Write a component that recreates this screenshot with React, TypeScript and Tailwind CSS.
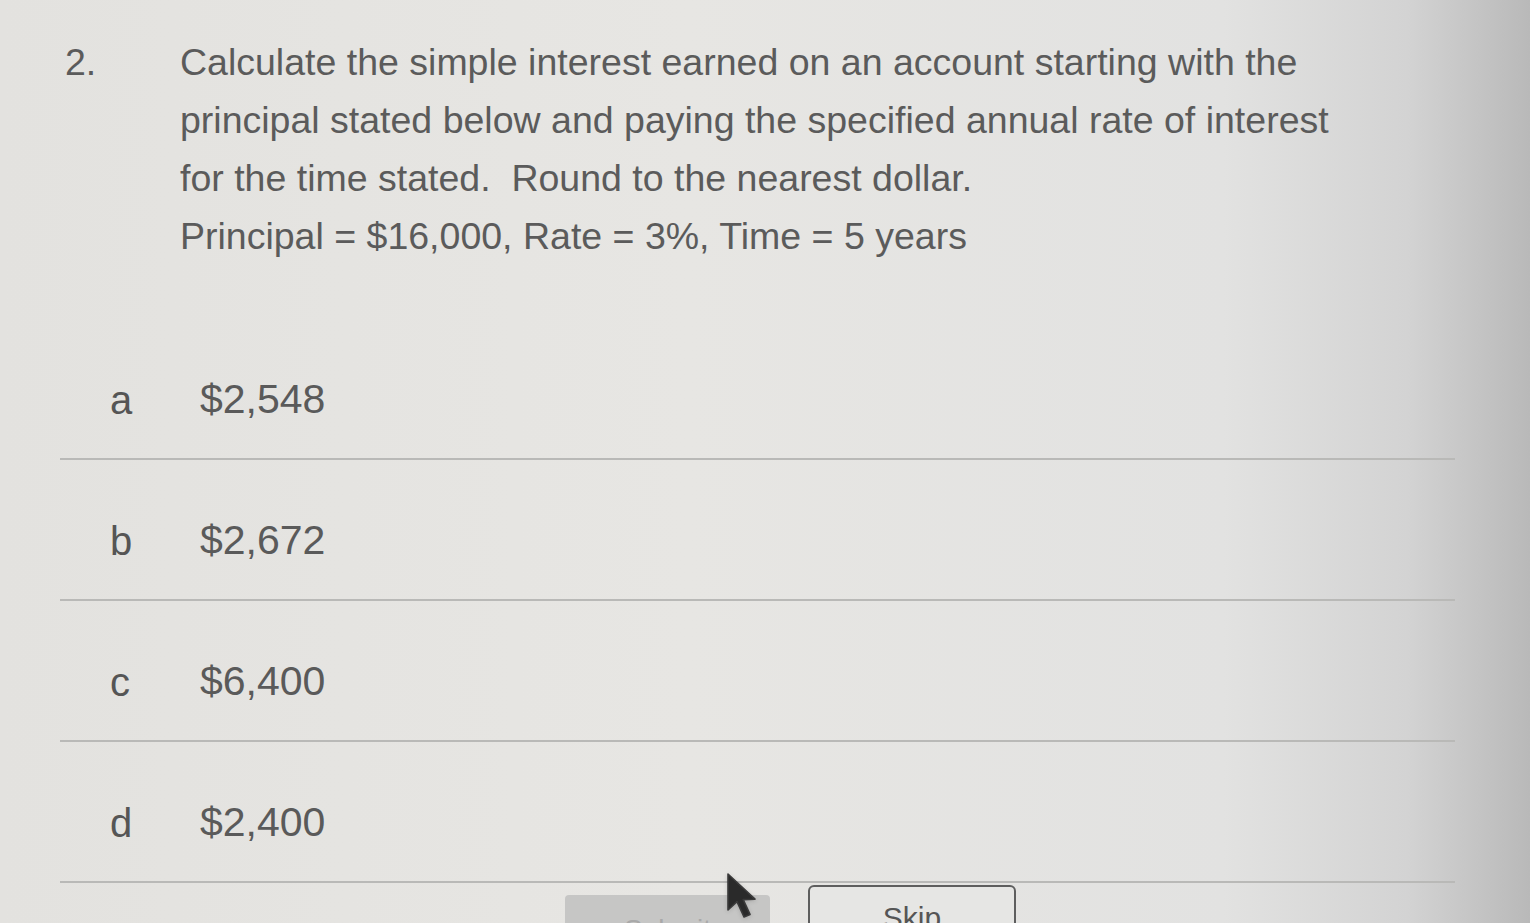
import { useMemo } from "react";

type Choice = { key: string; label: string };

function Cursor() {
    return (
        <svg
            className="absolute left-[726px] top-[872px] drop-shadow-sm"
            width="40"
            height="50"
            viewBox="0 0 20 25"
        >
            <path d="M1 1 L1 19 L5.5 14.8 L9 22.5 L12 21.2 L8.6 13.8 L14.5 13.6 Z" fill="#2a2a2a" stroke="#3a3a3a" strokeWidth="0.8" strokeLinejoin="round" />
        </svg>
    );
}

function ChoiceRow({ choice }: { choice: Choice }) {
    return (
        <div className="flex h-[141px] items-center border-b-2 border-[#b9b9b7] pt-[22px]">
            <span className="w-[140px] pl-[50px] text-[40px] text-[#555]">{choice.key}</span>
            <span className="text-[41px] text-[#5a5a5a]">{choice.label}</span>
        </div>
    );
}

export default function App() {
    const choices = useMemo<Choice[]>(
        () => [
            { key: "a", label: "$2,548" },
            { key: "b", label: "$2,672" },
            { key: "c", label: "$6,400" },
            { key: "d", label: "$2,400" },
        ],
        []
    );

    return (
        <div className="relative h-[923px] w-[1530px] overflow-hidden bg-[linear-gradient(90deg,#e3e2df_0%,#e7e6e3_45%,#e2e2e1_80%,#d3d3d3_92%,#b9b9b9_100%)] font-['Liberation_Sans',Arial,sans-serif]">
            <div className="pl-[65px] pt-[33px]">
                <div className="flex text-[37.5px] leading-[58px] text-[#5b5b5b]">
                    <span className="w-[115px]">2.</span>
                    <div className="w-[1250px]">
                        <p>Calculate the simple interest earned on an account starting with the</p>
                        <p>principal stated below and paying the specified annual rate of interest</p>
                        <p>for the time stated.&nbsp; Round to the nearest dollar.</p>
                        <p>Principal = $16,000, Rate = 3%, Time = 5 years</p>
                    </div>
                </div>
            </div>

            <div className="ml-[60px] mt-[54px] w-[1395px]">
                {choices.map((c) => (
                    <ChoiceRow key={c.key} choice={c} />
                ))}
            </div>

            <div className="flex items-start gap-[38px] pl-[565px] pt-[2px]">
                <button className="mt-[10px] h-[60px] w-[205px] rounded-sm bg-[#c6c6c5] pt-[10px] text-[28px] text-[#a9a9a9]">
                    Submit
                </button>
                <button className="h-[60px] w-[208px] rounded-md border-2 border-[#5e5e5e] bg-[#e6e6e4] pt-[4px] text-[30px] text-[#555]">
                    Skip
                </button>
            </div>

            <Cursor />
        </div>
    );
}
